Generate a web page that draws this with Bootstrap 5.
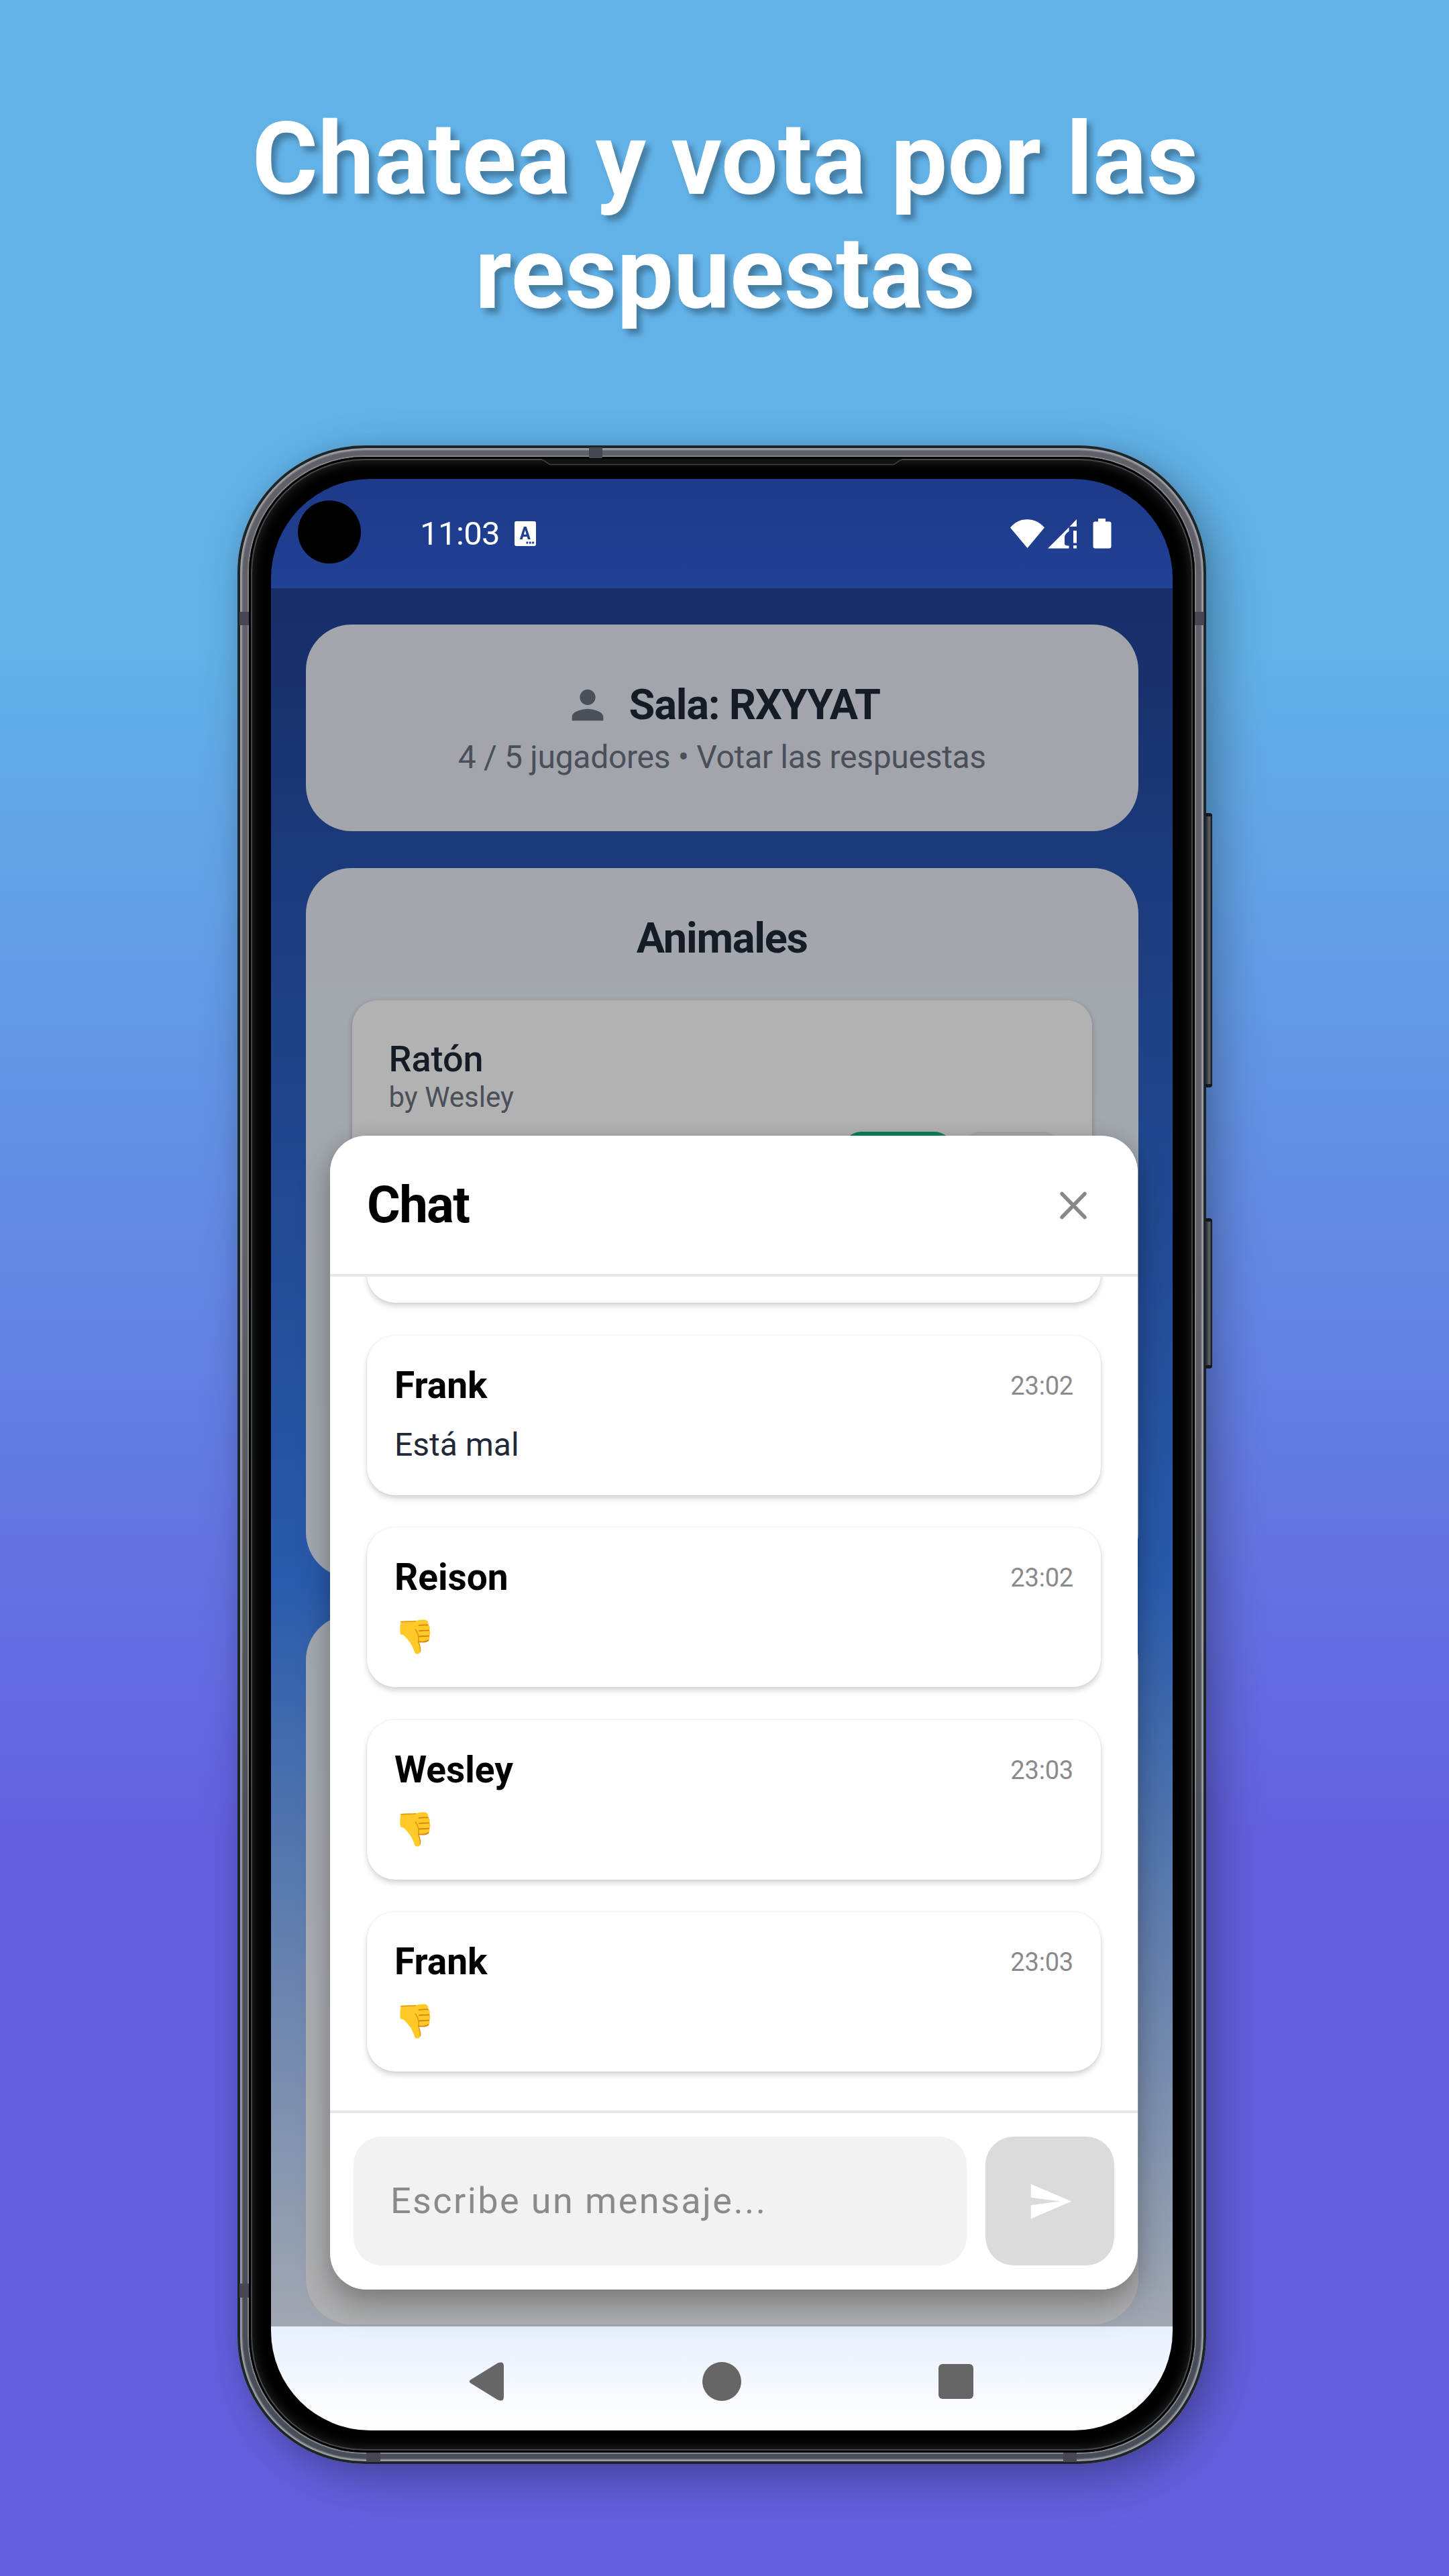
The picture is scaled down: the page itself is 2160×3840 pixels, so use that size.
<!DOCTYPE html>
<html lang="es">
<head>
<meta charset="utf-8">
<meta name="viewport" content="width=device-width, initial-scale=1">
<title>Chatea y vota por las respuestas</title>
<link href="https://cdn.jsdelivr.net/npm/bootstrap@5.3.0/dist/css/bootstrap.min.css" rel="stylesheet">
<style>
  body { width: 2160px; height: 3840px; overflow: hidden; font-family: Roboto, "Liberation Sans", sans-serif;
    background: linear-gradient(180deg, #62b2e8 0, #62b2e8 960px, #6460e0 2740px, #6460e0 100%); }
  .headline { font-size: 150px; line-height: 170px; font-weight: 700; color: #fff; width: 1600px; margin: 153px auto 0; padding-left: 2px;
    text-shadow: 7px 8px 8px rgba(0,0,0,.3); }

  /* device */
  .phone { width: 1444px; height: 3009px; margin: 171px 0 0 354px; padding: 17px; border-radius: 190px;
    background: linear-gradient(180deg, #5f6068 0, #5f6068 40%, #484e57 70%);
    box-shadow: 18px 22px 70px rgba(0,0,0,.3), 0 0 24px rgba(0,0,0,.06), inset 0 0 0 4px #1b262b, inset 0 0 2px 7px #a09fa4; }
  .bezel { height: 100%; padding: 33px; border-radius: 173px; background: #000;
    box-shadow: 0 0 0 2px #85868c, inset 0 0 0 3px #000, inset 0 0 0 5px #45474a, inset 0 0 18px 6px #26282a; }
  .screen { height: 100%; border-radius: 148px; overflow: hidden;
    background: linear-gradient(180deg, #1e3a8a 0, #3b82f6 56.5%, #fff 100%); }
  .side-key { left: 1443px; width: 10px; border-radius: 0 4px 4px 0; background: linear-gradient(90deg, #20262d, #4a4e56 45%, #62666c 65%, #1b2025); border: solid #14181d; border-width: 5px 1px 5px 0; }
  .antenna { background: #464750; }
  .earpiece { left: 453px; top: 20px; width: 538px; height: 10px; }

  .statusbar { height: 163px; padding: 0 91px 0 222px; color: #fff; }
  .clock { font-size: 49px; line-height: 60px; letter-spacing: -.6px; }
  .camera { left: 40px; top: 32px; width: 94px; height: 94px; background: #000; }

  .app { height: 2591px; padding: 54px 51px 0 51.5px; gap: 55px; }
  .app::after { content: ""; position: absolute; inset: 0; background: rgba(0,0,0,.3); }
  .panel { background: rgba(255,255,255,.9); border-radius: 68px; }
  .panel-title { font-size: 63px; line-height: 80px; font-weight: 700; color: #1f2937; letter-spacing: -1.2px; }
  .room { height: 308px; padding-top: 80px; gap: 7.5px; }
  .room-sub { font-size: 48px; line-height: 60px; color: #6b7280; letter-spacing: -.3px; }
  .category { height: 1058px; padding: 65px 69px 0; }
  .answer { margin-top: 52px; border-radius: 38px; padding: 56px 44px 56px 55px; height: 420px; background: #fff; box-shadow: 0 3px 8px rgba(0,0,0,.25); }
  .answer-word { font-size: 54px; line-height: 64px; font-weight: 500; color: #1f2937; }
  .answer-by { font-size: 42px; line-height: 50px; color: #6b7280; }
  .vote { height: 90px; border-radius: 28px; }
  .vote-yes { width: 165px; background: #10b981; }
  .vote-no { width: 152px; background: #eee; }

  /* chat window over the app */
  .chat, .chat-shadow { left: 88px; top: 979px; width: 1204px; height: 1720px; border-radius: 54px; }
  .chat { background: #fff; overflow: hidden; }
  .chat-shadow { box-shadow: 0 24px 48px rgba(0,0,0,.28), 0 0 24px rgba(0,0,0,.08); }
  .chat-head { height: 210px; border-bottom: 4px solid #e6e6e6; padding: 0 62px 0 55px; }
  .chat-title { font-size: 76px; line-height: 90px; font-weight: 700; color: #000; letter-spacing: -1.6px; }
  .chat-list { height: 1243px; padding: 0 55px 58px; gap: 48.5px; }
  .msg { height: 238px; border-radius: 42px; padding: 41px 41px 0; background: #fff; flex: none;
    box-shadow: 0 5px 8px rgba(0,0,0,.17), 0 0 3px rgba(0,0,0,.08); }
  .msg-name { font-size: 55px; line-height: 66px; font-weight: 700; color: #000; }
  .msg-time { font-size: 38px; line-height: 68px; height: 66px; color: #8a8a8a; letter-spacing: -.2px; }
  .msg-body { font-size: 48px; line-height: 62px; color: #1f2937; margin-top: 25px; height: 62px; }
  .thumb { margin-left: 8px; }
  .chat-foot { height: 266px; border-top: 4px solid #e6e6e6; padding: 35px 35px 0; gap: 28px; }
  .field { height: 192px; border-radius: 42px; background: #f2f2f2; padding-left: 55px; font-size: 54px; line-height: 64px; color: #8a8a8a; letter-spacing: 2.4px; }
  .send { width: 192px; height: 192px; border-radius: 42px; background: #dbdbdb; }

  .navbuttons { height: 155px; padding-top: 9px; gap: 291px; }
</style>
</head>
<body>
<svg width="0" height="0" class="position-absolute" aria-hidden="true">
  <symbol id="thumb-down" viewBox="0 0 46 52">
    <path d="M2 3.5C9 3 16 3.5 23 2.600C28 .5 37-.3 40 1.500C42.300 3 42.600 6 42 8C45 9.500 45.500 13.500 44 16C46 18.500 45.700 22.500 43.800 24.500C45.600 28 43.800 31.500 41 32.800C37 34 31 33.800 28 33.500C29.500 38 32 44 30.300 49C29 52.300 23.500 52.400 22.200 49.500C20.500 43.500 18 38 14 33C11 29 8 25.500 5 23.300L1 22.400C-.2 16 .2 9 2 3.500Z" fill="#ffc928"/>
    <path d="M1 3.800C9 2.800 17 3.500 24 2.500M23 14.500C26.500 20 29 24 27.800 33.300C30 40 31.500 44.500 30.300 48.500" fill="none" stroke="#e09a10" stroke-width="1.600"/>
    <path d="M28.500 9C33 7.800 38 8.500 42 8.300M29 17.200C34 16 39 17 43.500 16.300M29 25.500C34 24.500 39 25.500 43.500 24.700M28.500 33.300C34 34 39.500 33.800 42.500 31" fill="none" stroke="#d9820e" stroke-width="1.800" stroke-linecap="round"/>
  </symbol>
</svg>

<h1 class="headline text-center">Chatea y vota por las respuestas</h1>

<main class="phone position-relative">
  <span class="side-key position-absolute" style="top:548px;height:409px"></span>
  <span class="side-key position-absolute" style="top:1152px;height:224px"></span>
  <span class="antenna position-absolute" style="left:524px;top:3px;width:20px;height:16px"></span>
  <span class="antenna position-absolute" style="left:3px;top:248px;width:14px;height:20px"></span>
  <span class="antenna position-absolute" style="left:1427px;top:248px;width:14px;height:20px"></span>
  <span class="antenna position-absolute" style="left:3px;top:2740px;width:14px;height:21px"></span>
  <span class="antenna position-absolute" style="left:192px;top:2992px;width:21px;height:14px"></span>
  <span class="antenna position-absolute" style="left:1231px;top:2992px;width:20px;height:14px"></span>

  <div class="bezel">
    <svg class="earpiece position-absolute" viewBox="0 0 538 10"><path d="M0 0L14 9H524L538 0Z" fill="#101314"/><path d="M0 1C6 2 9 8 14 8.500H524C529 8 532 2 538 1" fill="none" stroke="#3c4043" stroke-width="1.500"/></svg>

    <div class="screen position-relative">
      <header class="statusbar d-flex align-items-center justify-content-between">
        <span class="camera position-absolute rounded-circle"></span>
        <div class="d-flex align-items-center" style="gap:22px">
          <span class="clock">11:03</span>
          <svg width="32" height="37" viewBox="0 0 33 37" preserveAspectRatio="none"><rect width="33" height="37" rx="3" fill="#fff"/><path d="M8 27L14.300 8H18.200L24.500 27H20.500L19.300 23H13.200L12 27ZM14.200 19.800H18.300L16.250 13Z" fill="#21408f" fill-rule="evenodd"/><path d="M18 30.500h3v3h-3zM22.500 30.500h3v3h-3zM27 30.500h3v3h-3z" fill="#21408f"/></svg>
        </div>
        <svg width="151" height="46" viewBox="0 0 151 46" fill="#fff">
          <path d="M0 13.500C14-3 37-3 51 13.500L25.500 44Z"/>
          <path d="M99 1V12H88.500ZM87.500 13V19C84 21 81.500 24 81 27V38C81.500 39.800 83 40.500 87.500 40.500V44.500H56Z"/>
          <path d="M94 18h5v18.500h-5zM94 40h5v4.500h-5z"/>
          <path d="M131 0h11v4.500h5.500q3 0 3 3v34q0 3-3 3h-21q-3 0-3-3v-34q0-3 3-3h4.500z"/>
        </svg>
      </header>

      <section class="app position-relative overflow-hidden d-flex flex-column">
        <div class="panel room flex-shrink-0 d-flex flex-column align-items-center">
          <div class="panel-title d-flex align-items-center" style="gap:27px">
            <svg width="70" height="70" viewBox="0 0 24 24" fill="#6b7280"><path d="M12 12c2.210 0 4-1.790 4-4s-1.790-4-4-4-4 1.790-4 4 1.790 4 4 4zm0 2c-2.670 0-8 1.340-8 4v2h16v-2c0-2.660-5.330-4-8-4z"/></svg>
            <span>Sala: RXYYAT</span>
          </div>
          <div class="room-sub">4 / 5 jugadores • Votar las respuestas</div>
        </div>
        <div class="panel category flex-shrink-0">
          <h2 class="panel-title text-center mb-0">Animales</h2>
          <div class="answer">
            <div class="answer-word">Ratón</div>
            <div class="answer-by">by Wesley</div>
            <div class="d-flex justify-content-end" style="gap:11px;margin-top:26px">
              <span class="vote vote-yes"></span><span class="vote vote-no"></span>
            </div>
          </div>
        </div>
        <div class="panel category flex-shrink-0"></div>
      </section>

      <div class="chat-shadow position-absolute"></div>

      <nav class="navbuttons d-flex align-items-center justify-content-center">
        <svg width="58" height="58" viewBox="0 0 58 58"><path d="M3.500 26.500L44 1.500Q53-2 53 6V52Q53 60 44 56.500L3.500 31.500Q0 29 3.500 26.500Z" fill="#666"/></svg>
        <svg width="58" height="58" viewBox="0 0 58 58"><circle cx="29" cy="29" r="29" fill="#666"/></svg>
        <svg width="58" height="58" viewBox="0 0 58 58"><rect x="3" y="3" width="52" height="52" rx="6" fill="#666"/></svg>
      </nav>

      <section class="chat position-absolute d-flex flex-column">
        <div class="chat-head d-flex align-items-center justify-content-between">
          <h3 class="chat-title mb-0">Chat</h3>
          <svg width="67" height="67" viewBox="0 0 67 67" fill="none" stroke="#888" stroke-width="5.500" stroke-linecap="round"><path d="M16 16.500L50 51.500M50 16.500L16 51.500"/></svg>
        </div>
        <div class="chat-list overflow-hidden d-flex flex-column justify-content-end">
          <div class="msg"></div>
          <div class="msg">
            <div class="d-flex justify-content-between"><span class="msg-name">Frank</span><span class="msg-time">23:02</span></div>
            <div class="msg-body">Está mal</div>
          </div>
          <div class="msg">
            <div class="d-flex justify-content-between"><span class="msg-name">Reison</span><span class="msg-time">23:02</span></div>
            <div class="msg-body d-flex align-items-center"><svg class="thumb" width="46" height="52"><use href="#thumb-down"/></svg></div>
          </div>
          <div class="msg">
            <div class="d-flex justify-content-between"><span class="msg-name">Wesley</span><span class="msg-time">23:03</span></div>
            <div class="msg-body d-flex align-items-center"><svg class="thumb" width="46" height="52"><use href="#thumb-down"/></svg></div>
          </div>
          <div class="msg">
            <div class="d-flex justify-content-between"><span class="msg-name">Frank</span><span class="msg-time">23:03</span></div>
            <div class="msg-body d-flex align-items-center"><svg class="thumb" width="46" height="52"><use href="#thumb-down"/></svg></div>
          </div>
        </div>
        <div class="chat-foot d-flex">
          <div class="field flex-grow-1 d-flex align-items-center">Escribe un mensaje...</div>
          <div class="send d-flex align-items-center justify-content-center">
            <svg width="69" height="69" viewBox="0 0 24 24" fill="#fff"><path d="M2.010 21L23 12 2.010 3 2 10l15 2-15 2z"/></svg>
          </div>
        </div>
      </section>
    </div>
  </div>
</main>
<script src="https://cdn.jsdelivr.net/npm/bootstrap@5.3.0/dist/js/bootstrap.bundle.min.js"></script>
</body>
</html>
